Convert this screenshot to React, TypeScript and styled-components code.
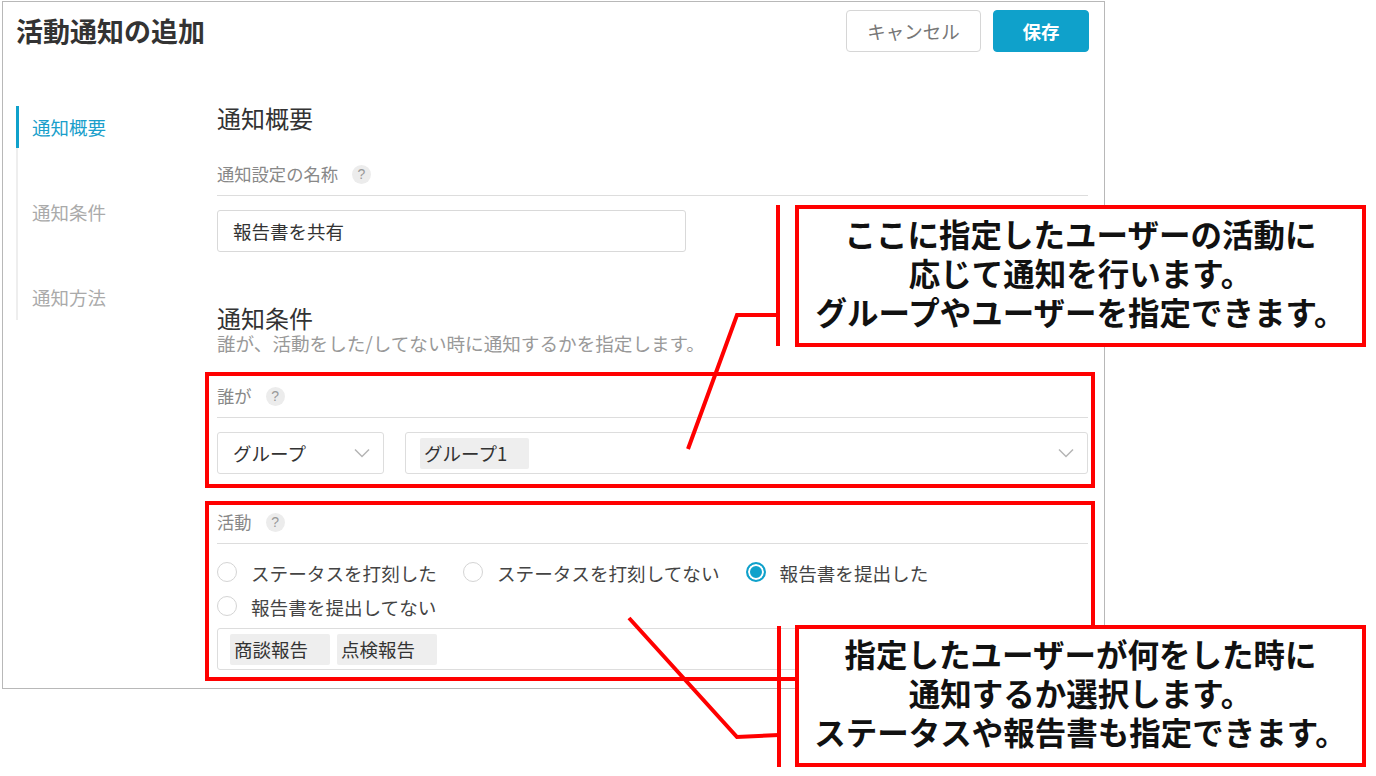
import React from "react"
import styled, { createGlobalStyle } from "styled-components"

const GlobalStyle = createGlobalStyle`
    html, body {
        margin: 0;
        padding: 0;
        background: #fff;
    }
    body {
        font-family: "Noto Sans CJK JP", "Noto Sans", sans-serif;
        color: #333;
    }
    * {
        box-sizing: border-box;
    }
`

const BLUE = "#0fa1cb"
const RED = "#ff0000"

const Page = styled.div`
    position: relative;
    width: 1376px;
    height: 776px;
    overflow: hidden;
    padding: 1px 0 0 2px;
`

const Window = styled.div`
    width: 1103px;
    height: 688px;
    border: 1px solid #b8b8b8;
    background: #fff;
    overflow: hidden;
`

const Header = styled.div`
    display: flex;
    align-items: center;
    justify-content: space-between;
    height: 50px;
    padding: 8px 15px 0 13px;
`

const Title = styled.h1`
    margin: 0;
    font-size: 27px;
    line-height: 34px;
    font-weight: 700;
    color: #333;
`

const Actions = styled.div`
    display: flex;
    gap: 12px;
`

const Button = styled.button<{ $primary?: boolean }>`
    height: 42px;
    width: ${({ $primary }) => ($primary ? "96px" : "135px")};
    border-radius: 4px;
    font-family: inherit;
    font-size: 18.5px;
    line-height: 40px;
    padding: 0;
    border: 1px solid ${({ $primary }) => ($primary ? BLUE : "#d6d6d6")};
    background: ${({ $primary }) => ($primary ? BLUE : "#fff")};
    color: ${({ $primary }) => ($primary ? "#fff" : "#777")};
    font-weight: ${({ $primary }) => ($primary ? 700 : 400)};
`

const Body = styled.div`
    display: flex;
    margin-top: 52px;
    padding-left: 13px;
`

const Nav = styled.nav`
    width: 201px;
    height: 214px;
    margin-top: 2px;
    border-left: 2px solid #eeeeee;
    flex: none;
`

const NavItem = styled.div<{ $active?: boolean }>`
    margin-left: -2px;
    height: 42px;
    line-height: 42px;
    padding-left: 13px;
    font-size: 18.5px;
    border-left: 3px solid ${({ $active }) => ($active ? BLUE : "transparent")};
    color: ${({ $active }) => ($active ? "#1a9fcb" : "#aaaaaa")};

    & + & {
        margin-top: 43px;
    }
`

const Main = styled.div`
    width: 871px;
    display: flex;
    flex-direction: column;
`

const SectionTitle = styled.h2<{ $gap?: number }>`
    margin: ${({ $gap }) => $gap || 0}px 0 0;
    font-size: 24px;
    line-height: 28px;
    font-weight: 400;
    color: #333;
`

const SectionNote = styled.p`
    margin: 0;
    font-size: 18.6px;
    line-height: 22px;
    color: #999;
`

const FieldHead = styled.div<{ $gap?: number }>`
    display: flex;
    align-items: center;
    height: 34px;
    padding-bottom: 9px;
    margin-top: ${({ $gap }) => $gap || 0}px;
    border-bottom: 1px solid #dddddd;
    font-size: 17.3px;
    line-height: 24px;
    color: #888;
`

const Help = styled.span`
    display: inline-flex;
    align-items: center;
    justify-content: center;
    width: 19px;
    height: 19px;
    margin-left: 14px;
    border-radius: 50%;
    background: #ececec;
    color: #999;
    font-family: "Liberation Sans", sans-serif;
    font-size: 14px;
    line-height: 1;
`

const TextInput = styled.div`
    width: 469px;
    height: 42px;
    margin-top: 14px;
    padding: 0 15px;
    border: 1px solid #d9d9d9;
    border-radius: 3px;
    font-size: 18.5px;
    line-height: 40px;
    color: #333;
`

const Marked = styled.div<{ $gap: number; $top: number; $bottom: number }>`
    margin: ${({ $gap }) => $gap}px -7px 0 -12px;
    padding: ${({ $top, $bottom }) => `${$top}px 3px ${$bottom}px 8px`};
    border: 4px solid ${RED};
`

const SelectRow = styled.div`
    display: flex;
    gap: 21px;
    margin-top: 14px;
`

const Select = styled.div<{ $grow?: boolean }>`
    display: flex;
    align-items: center;
    justify-content: space-between;
    height: 42px;
    width: ${({ $grow }) => ($grow ? "auto" : "167px")};
    flex: ${({ $grow }) => ($grow ? 1 : "none")};
    padding: 0 13px 0 ${({ $grow }) => ($grow ? 14 : 15)}px;
    border: 1px solid #dddddd;
    border-radius: 3px;
    font-size: 18.5px;
    color: #333;
`

const Tag = styled.span`
    display: inline-block;
    height: 31px;
    line-height: 31px;
    padding: 0 22px 0 4px;
    background: #eeeeee;
    border-radius: 2px;
    font-size: 18.5px;
    color: #333;
`

const RadioGroup = styled.div`
    display: flex;
    flex-wrap: wrap;
    margin-top: 11px;
`

const RadioItem = styled.label`
    display: flex;
    align-items: center;
    height: 34px;
    margin-right: 26px;
    font-size: 18.6px;
    color: #444;
`

const RadioDot = styled.span<{ $checked?: boolean }>`
    width: 20px;
    height: 20px;
    margin-right: 14px;
    border-radius: 50%;
    border: ${({ $checked }) => ($checked ? `2px solid ${BLUE}` : "1px solid #d4d4d4")};
    background: ${({ $checked }) => ($checked ? BLUE : "#fff")};
    box-shadow: ${({ $checked }) => ($checked ? "inset 0 0 0 2px #fff" : "none")};
`

const TagInput = styled.div`
    display: flex;
    align-items: center;
    gap: 7px;
    height: 42px;
    margin-top: 5px;
    padding-left: 12px;
    border: 1px solid #dddddd;
    border-radius: 3px;
`

const Callout = styled.div<{ $top: number }>`
    position: absolute;
    left: 795px;
    top: ${({ $top }) => $top}px;
    width: 571px;
    height: 142px;
    display: flex;
    flex-direction: column;
    align-items: center;
    justify-content: center;
    padding-bottom: 7px;
    border: 4px solid ${RED};
    background: #fff;
    font-size: 31.5px;
    font-weight: 700;
    color: #111;
`

const CalloutLine = styled.div`
    height: 39px;
    line-height: 39px;
    white-space: nowrap;
`

const Connectors = styled.svg`
    position: absolute;
    left: 0;
    top: 0;
    pointer-events: none;
`

function Chevron() {
    return (
        <svg width="16" height="10" viewBox="0 0 16 10">
            <polyline points="1,1.5 8,8.5 15,1.5" fill="none" stroke="#b5b5b5" strokeWidth="1.5" />
        </svg>
    )
}

const radios = [
    { label: "ステータスを打刻した" },
    { label: "ステータスを打刻してない" },
    { label: "報告書を提出した", checked: true },
    { label: "報告書を提出してない" },
]

export default function App(): JSX.Element {
    return (
        <Page>
            <GlobalStyle />
            <Window>
                <Header>
                    <Title>活動通知の追加</Title>
                    <Actions>
                        <Button>キャンセル</Button>
                        <Button $primary>保存</Button>
                    </Actions>
                </Header>
                <Body>
                    <Nav>
                        <NavItem $active>通知概要</NavItem>
                        <NavItem>通知条件</NavItem>
                        <NavItem>通知方法</NavItem>
                    </Nav>
                    <Main>
                        <SectionTitle>通知概要</SectionTitle>
                        <FieldHead $gap={30}>
                            通知設定の名称<Help>?</Help>
                        </FieldHead>
                        <TextInput>報告書を共有</TextInput>

                        <SectionTitle $gap={52}>通知条件</SectionTitle>
                        <SectionNote>誰が、活動をした/してない時に通知するかを指定します。</SectionNote>

                        <Marked $gap={18} $top={8} $bottom={10}>
                            <FieldHead>
                                誰が<Help>?</Help>
                            </FieldHead>
                            <SelectRow>
                                <Select>
                                    グループ
                                    <Chevron />
                                </Select>
                                <Select $grow>
                                    <Tag>グループ1</Tag>
                                    <Chevron />
                                </Select>
                            </SelectRow>
                        </Marked>

                        <Marked $gap={13} $top={5} $bottom={7}>
                            <FieldHead>
                                活動<Help>?</Help>
                            </FieldHead>
                            <RadioGroup>
                                {radios.map((r) => (
                                    <RadioItem key={r.label}>
                                        <RadioDot $checked={r.checked} />
                                        {r.label}
                                    </RadioItem>
                                ))}
                            </RadioGroup>
                            <TagInput>
                                <Tag>商談報告</Tag>
                                <Tag>点検報告</Tag>
                            </TagInput>
                        </Marked>
                    </Main>
                </Body>
            </Window>

            <Connectors width="1376" height="776" viewBox="0 0 1376 776">
                <g fill="none" stroke={RED} strokeWidth="4">
                    <line x1="778" y1="205" x2="778" y2="346" />
                    <polyline points="778,315 737,315 688,449" />
                    <line x1="779" y1="626" x2="779" y2="767" />
                    <polyline points="779,735 737,737 629,618" />
                </g>
            </Connectors>

            <Callout $top={205}>
                <CalloutLine>ここに指定したユーザーの活動に</CalloutLine>
                <CalloutLine>応じて通知を行います。</CalloutLine>
                <CalloutLine>グループやユーザーを指定できます。</CalloutLine>
            </Callout>
            <Callout $top={625}>
                <CalloutLine>指定したユーザーが何をした時に</CalloutLine>
                <CalloutLine>通知するか選択します。</CalloutLine>
                <CalloutLine>ステータスや報告書も指定できます。</CalloutLine>
            </Callout>
        </Page>
    )
}
